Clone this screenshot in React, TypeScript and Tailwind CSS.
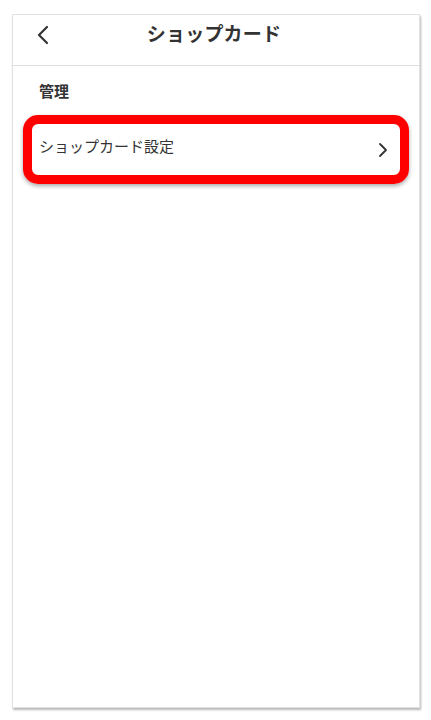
export default function App() {
  return (
    <div
      className="w-[431px] h-[720px] bg-white pt-[14px] pl-[12px]"
      style={{ fontFamily: '"Noto Sans CJK JP", "Noto Sans", sans-serif' }}
    >
      <div className="w-[408px] h-[694px] bg-white border border-[#e2e2e2] shadow-[1px_2px_2px_rgba(0,0,0,0.28)] flex flex-col">
        {/* header */}
        <div className="h-[51px] shrink-0 border-b border-[#dadde0] flex items-start relative">
          <button className="absolute left-[22px] top-[9px] w-[16px] h-[22px] flex items-center justify-center text-[#333]">
            <svg width="14" height="20" viewBox="0 0 14 20" fill="none">
              <path d="M11 2L3 10L11 18" stroke="currentColor" strokeWidth="2.2" strokeLinecap="round" strokeLinejoin="round" />
            </svg>
          </button>
          <h1 className="flex-1 text-center text-[19px] leading-[28px] pt-[4px] font-bold text-[#333] tracking-[0.2px] pr-[4px]">
            ショップカード
          </h1>
        </div>

        {/* section */}
        <div className="px-[10px] pt-[14px]">
          <div className="px-[16px] text-[15px] font-bold text-[#333] leading-[22px]">管理</div>

          <div className="mt-[13px] h-[69px] rounded-[15px] border-[9px] border-[#ff0000] shadow-[0_2px_4px_rgba(0,0,0,0.35)] flex items-center justify-between pl-[7px] pr-[12px]">
            <span className="text-[15px] text-[#333] pb-[6px]">ショップカード設定</span>
            <svg width="10" height="16" viewBox="0 0 10 16" fill="none" className="text-[#333]">
              <path d="M2 2L8 8L2 14" stroke="currentColor" strokeWidth="1.8" strokeLinecap="round" strokeLinejoin="round" />
            </svg>
          </div>
        </div>
      </div>
    </div>
  );
}
